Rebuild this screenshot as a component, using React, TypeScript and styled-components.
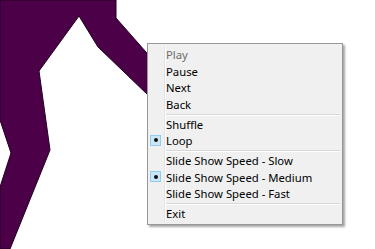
import * as React from 'react';
import styled, { createGlobalStyle } from 'styled-components';

const GlobalStyle = createGlobalStyle`
  html, body {
    margin: 0;
    padding: 0;
    background: #ffffff;
  }
`;

const Stage = styled.div`
  position: relative;
  width: 375px;
  height: 249px;
  overflow: hidden;
  background: #ffffff;
  font-family: "Noto Sans", "Open Sans", sans-serif;
`;

const Figure = styled.svg`
  position: absolute;
  left: 0;
  top: 0;
`;

const Menu = styled.div`
  position: absolute;
  left: 147px;
  top: 43px;
  width: 196px;
  box-sizing: border-box;
  padding: 2.5px 0 1.5px 0;
  background: #f0f0f0;
  border: 1px solid #979797;
  box-shadow: 2px 2px 2px rgba(0, 0, 0, 0.35);
  display: flex;
  flex-direction: column;
`;

const Gutter = styled.div`
  position: absolute;
  left: 16px;
  top: 2px;
  bottom: 2px;
  width: 1px;
  background: #e2e3e3;
  border-right: 1px solid #ffffff;
`;

const Item = styled.div<{ disabled?: boolean }>`
  position: relative;
  display: flex;
  align-items: center;
  height: 16.5px;
  padding-left: 18px;
  font-size: 11.3px;
  color: ${p => (p.disabled ? '#6d6d6d' : '#000000')};
  white-space: nowrap;
`;

const Check = styled.span`
  position: absolute;
  left: 2px;
  top: 50%;
  width: 11px;
  height: 11px;
  margin-top: -6px;
  box-sizing: border-box;
  border: 1px solid #8ecff0;
  background: #cde6f5;
  display: flex;
  align-items: center;
  justify-content: center;

  &::after {
    content: '';
    width: 4px;
    height: 4px;
    border-radius: 50%;
    background: #111;
  }
`;

const Separator = styled.div`
  height: 3.5px;
  display: flex;
  align-items: center;
  padding-left: 18px;
  padding-right: 2px;

  &::before {
    content: '';
    flex: 1;
    height: 1px;
    background: #d7d7d7;
    box-shadow: 0 1px 0 #ffffff;
  }
`;

type Entry = { label: string; disabled?: boolean; checked?: boolean } | 'sep';

const entries: Entry[] = [
  { label: 'Play', disabled: true },
  { label: 'Pause' },
  { label: 'Next' },
  { label: 'Back' },
  'sep',
  { label: 'Shuffle' },
  { label: 'Loop', checked: true },
  'sep',
  { label: 'Slide Show Speed - Slow' },
  { label: 'Slide Show Speed - Medium', checked: true },
  { label: 'Slide Show Speed - Fast' },
  'sep',
  { label: 'Exit' },
];

export default function App() {
  return (
    <>
      <GlobalStyle />
      <Stage>
        <Figure width="375" height="249" viewBox="0 0 375 249">
          <polygon
            points="0,0 116,0 116,18 175,85 175,121 98,47 79,16 39,71 50,150 10,249 0,249 0,187 11,153 0,120"
            fill="#4b0048"
            stroke="#220020"
            strokeWidth="1"
            strokeLinejoin="miter"
          />
        </Figure>
        <Menu>
          <Gutter />
          {entries.map((e, i) =>
            e === 'sep' ? (
              <Separator key={i} />
            ) : (
              <Item key={i} disabled={e.disabled}>
                {e.checked && <Check />}
                {e.label}
              </Item>
            )
          )}
        </Menu>
      </Stage>
    </>
  );
}
